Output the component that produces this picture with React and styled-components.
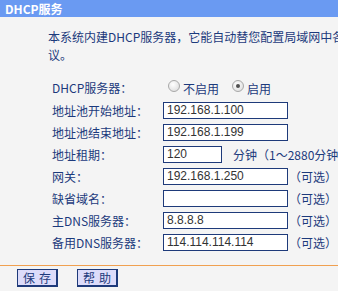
import React from "react";
import styled, { createGlobalStyle } from "styled-components";

const GlobalStyle = createGlobalStyle`
  html, body {
    margin: 0;
    padding: 0;
    background: #f4f4f4;
    overflow: hidden;
  }
`;

const rows = [
  { label: "地址池开始地址：", value: "192.168.1.100" },
  { label: "地址池结束地址：", value: "192.168.1.199" },
  { label: "地址租期：", value: "120", short: true, note: "分钟（1～2880分钟，缺省为120分钟）" },
  { label: "网关：", value: "192.168.1.250", optional: true },
  { label: "缺省域名：", value: "", optional: true },
  { label: "主DNS服务器：", value: "8.8.8.8", optional: true },
  { label: "备用DNS服务器：", value: "114.114.114.114", optional: true },
];

const App = () => {
  return (
    <Page>
      <GlobalStyle />
      <TitleBar>DHCP服务</TitleBar>
      <Intro>
        本系统内建DHCP服务器，它能自动替您配置局域网中各计算机的TCP/IP协
        <br />
        议。
      </Intro>

      <Form>
        <Row $first>
          <Label>DHCP服务器：</Label>
          <Field>
            <Radio />
            <RadioText>不启用</RadioText>
            <Radio $checked />
            <RadioText>启用</RadioText>
          </Field>
        </Row>
        {rows.map((r) => (
          <Row key={r.label}>
            <Label>{r.label}</Label>
            <Field>
              <TextBox $short={r.short}>{r.value}</TextBox>
              {r.note && <Note>{r.note}</Note>}
              {r.optional && <Optional>（可选）</Optional>}
            </Field>
          </Row>
        ))}
      </Form>

      <Divider />

      <ButtonBar>
        <Button>保存</Button>
        <Button>帮助</Button>
      </ButtonBar>
    </Page>
  );
};

export default App;

const Page = styled.div`
  width: 600px;
  font-family: "Noto Sans CJK SC", "Noto Sans", sans-serif;
  font-size: 12px;
  color: #1c3a7c;
`;

const TitleBar = styled.div`
  height: 17px;
  line-height: 17px;
  padding-left: 5px;
  background: #6a9af2;
  color: #ffffff;
  font-weight: bold;
`;

const Intro = styled.div`
  margin-top: 11px;
  padding-left: 48px;
  line-height: 18px;
  white-space: nowrap;
`;

const Form = styled.div`
  margin-top: 12px;
  padding-left: 52px;
  display: flex;
  flex-direction: column;
`;

const Row = styled.div`
  display: grid;
  grid-template-columns: 111px auto;
  align-items: center;
  height: ${(p) => (p.$first ? "23px" : "22px")};
`;

const Label = styled.div`
  white-space: nowrap;
`;

const Field = styled.div`
  display: flex;
  align-items: center;
  white-space: nowrap;
`;

const Radio = styled.span`
  position: relative;
  box-sizing: border-box;
  width: 12px;
  height: 12px;
  margin-left: ${(p) => (p.$checked ? "13px" : "5px")};
  margin-top: -4px;
  border: 1px solid #a8a8a8;
  border-radius: 50%;
  background: radial-gradient(circle at 40% 35%, #ffffff, #d8d8d8);

  &::after {
    content: "";
    display: ${(p) => (p.$checked ? "block" : "none")};
    position: absolute;
    left: 3px;
    top: 3px;
    width: 4px;
    height: 4px;
    border-radius: 50%;
    background: #505050;
  }
`;

const RadioText = styled.span`
  margin-left: 3px;
  margin-top: 2px;
`;

const TextBox = styled.div`
  box-sizing: border-box;
  width: ${(p) => (p.$short ? "59px" : "125px")};
  height: 17px;
  padding: 0 3px;
  border: 1px solid #1e3a7a;
  background: #ffffff;
  color: #333333;
  font-family: "Liberation Sans", Arial, sans-serif;
  font-size: 12px;
  line-height: 15px;
`;

const Note = styled.span`
  margin-left: 11px;
`;

const Optional = styled.span`
  margin-left: 1px;
`;

const Divider = styled.div`
  margin-top: 12px;
  height: 1px;
  background: #f0a050;
`;

const ButtonBar = styled.div`
  display: flex;
  gap: 19px;
  padding: 3px 0 0 17px;
`;

const Button = styled.button`
  box-sizing: border-box;
  width: 41px;
  height: 18px;
  padding: 0 0 0 4px;
  border: 1px solid #1e3a7a;
  border-right-width: 2px;
  border-bottom-width: 2px;
  background: #dcdcfa;
  color: #1c3a7c;
  font-family: "Noto Sans CJK SC", sans-serif;
  font-size: 12px;
  letter-spacing: 4px;
  line-height: 14px;
`;
